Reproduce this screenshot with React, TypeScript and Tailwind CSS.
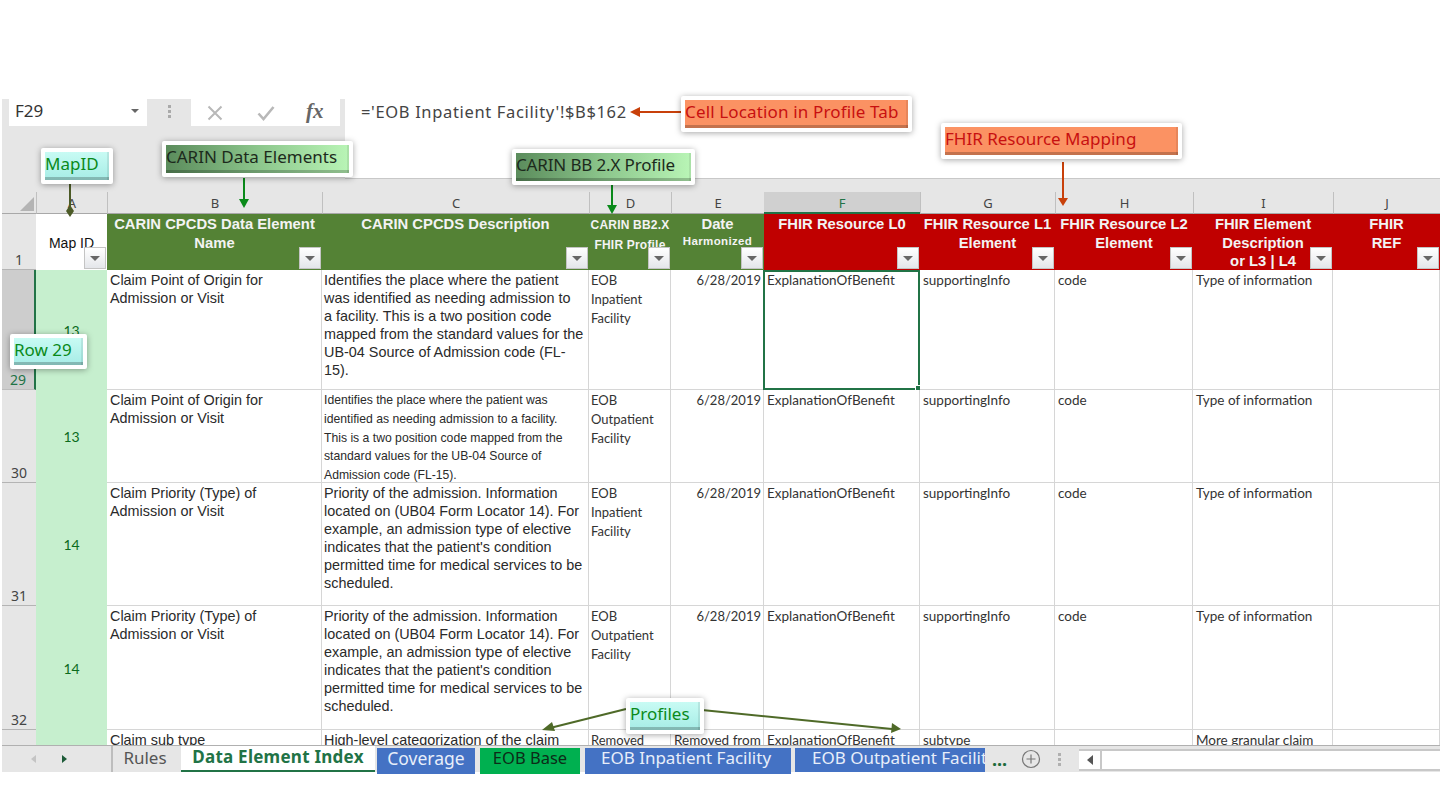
import React from "react";

const arial = "font-['Liberation_Sans',Arial,sans-serif]";
const ui = "font-['Noto_Sans',sans-serif]";
const calibri = "font-['Lato','Noto_Sans',sans-serif]";

function Filter() {
  return (
    <div className="absolute right-[1px] bottom-[1px] w-[22px] h-[22px] flex items-center justify-center bg-linear-to-b from-white to-[#e4e6ea] border border-[#c4c4c4]">
      <div className="w-0 h-0 border-l-[5px] border-r-[5px] border-t-[5px] border-l-transparent border-r-transparent border-t-[#666]" />
    </div>
  );
}

function Lines({ lines, className = "" }: { lines: string[]; className?: string }) {
  return (
    <div className={className}>
      {lines.map((l, i) => (
        <div key={i} className="whitespace-nowrap">{l}</div>
      ))}
    </div>
  );
}

type Tone = "green" | "red";
function Head({ lines, tone }: { lines: React.ReactNode[]; tone: Tone }) {
  return (
    <div
      className={`relative overflow-hidden pt-[1px] text-center font-bold text-[14.8px] leading-[18.5px] text-[#f3f3f3] ${arial} ${
        tone === "green" ? "bg-[#548235]" : "bg-[#c00000]"
      }`}
    >
      {lines.map((l, i) => (
        <div key={i} className="whitespace-nowrap">{l}</div>
      ))}
      <Filter />
    </div>
  );
}

const Col = ({ children, active }: { children: string; active?: boolean }) => (
  <div
    className={`flex items-center justify-center pt-[3px] text-[13px] ${ui} ${
      active
        ? "bg-[#d0d0d0] text-[#217346] border-b-2 border-[#217346]"
        : "bg-[#e6e6e6] text-[#444] border-l border-[#c0c0c0] border-b border-b-[#a8a8a8]"
    }`}
  >
    {children}
  </div>
);

const RowNo = ({ n, active }: { n: number; active?: boolean }) => (
  <div
    className={`flex items-end justify-center text-[14px] leading-[18px] border-b ${ui} ${
      active
        ? "bg-[#cdcdcd] text-[#217346] border-[#bdbdbd] border-r-2 border-r-[#217346]"
        : "bg-[#e6e6e6] text-[#444] border-[#b4b4b4]"
    }`}
  >
    {n}
  </div>
);

const cell = "border-r border-b border-[#d6d6d6] bg-white overflow-hidden";

const MapId = ({ n }: { n: number }) => (
  <div className={`flex items-center justify-center bg-[#c6efce] text-[#0b6b1d] text-[14px] ${calibri}`}>{n}</div>
);
const Name = ({ lines }: { lines: string[] }) => (
  <Lines lines={lines} className={`${cell} pl-[3px] pt-[1px] text-[14.4px] leading-[18px] text-[#2a2a2a] ${arial}`} />
);
const Desc = ({ lines, small }: { lines: string[]; small?: boolean }) => (
  <Lines
    lines={lines}
    className={`${cell} pl-[2px] pt-[1px] text-[#2a2a2a] ${arial} ${small ? "text-[12.2px] leading-[18.8px]" : "text-[14.4px] leading-[18px]"}`}
  />
);
const Profile = ({ lines }: { lines: string[] }) => (
  <Lines lines={lines} className={`${cell} pl-[2px] pt-[1px] text-[13px] leading-[19px] text-[#333] ${calibri}`} />
);
const DateCell = ({ v }: { v: string }) => (
  <div className={`${cell} pr-[2px] pt-[1px] text-right text-[13px] leading-[19px] text-[#333] ${calibri}`}>{v}</div>
);
const Plain = ({ v, selected }: { v?: string; selected?: boolean }) => (
  <div
    className={`relative whitespace-nowrap text-[13.5px] text-[#333] ${calibri} ${
      selected ? "bg-white border-2 border-[#217346] pl-[2px] -ml-[1px] leading-[17px]" : `${cell} pl-[3px] pt-[1px] leading-[19px]`
    }`}
  >
    {v}
    {selected && <div className="absolute -right-[3px] -bottom-[3px] w-[6px] h-[6px] bg-[#217346] border border-white" />}
  </div>
);

function Callout({ label, pos, inner, text }: { label: string; pos: string; inner: string; text: string }) {
  return (
    <div className={`absolute ${pos} bg-white p-[4px] rounded-[2px] shadow-[0_1px_6px_rgba(0,0,0,0.35)]`}>
      <div
        className={`h-full flex items-center pb-[5px] whitespace-nowrap text-[17px] leading-none shadow-[inset_0_-3px_0_rgba(0,0,0,0.22),inset_-2px_0_0_rgba(0,0,0,0.08)] ${ui} ${inner} ${text}`}
      >
        {label}
      </div>
    </div>
  );
}

const rows = [
  {
    n: 29, id: 13,
    name: ["Claim Point of Origin for", "Admission or Visit"],
    desc: ["Identifies the place where the patient", "was identified as needing admission to", "a facility. This is a two position code", "mapped from the standard values for the", "UB-04 Source of Admission code (FL-", "15)."],
    prof: ["EOB", "Inpatient", "Facility"],
  },
  {
    n: 30, id: 13, small: true,
    name: ["Claim Point of Origin for", "Admission or Visit"],
    desc: ["Identifies the place where the patient was", "identified as needing admission to a facility.", "This is a two position code mapped from the", "standard values for the UB-04 Source of", "Admission code (FL-15)."],
    prof: ["EOB", "Outpatient", "Facility"],
  },
  {
    n: 31, id: 14,
    name: ["Claim Priority (Type) of", "Admission or Visit"],
    desc: ["Priority of the admission. Information", "located on (UB04 Form Locator 14). For", "example, an admission type of elective", "indicates that the patient's condition", "permitted time for medical services to be", "scheduled."],
    prof: ["EOB", "Inpatient", "Facility"],
  },
  {
    n: 32, id: 14,
    name: ["Claim Priority (Type) of", "Admission or Visit"],
    desc: ["Priority of the admission. Information", "located on (UB04 Form Locator 14). For", "example, an admission type of elective", "indicates that the patient's condition", "permitted time for medical services to be", "scheduled."],
    prof: ["EOB", "Outpatient", "Facility"],
  },
];

function Tab({ label, w, cls }: { label: string; w: string; cls: string }) {
  return (
    <div className={`${w} h-full shrink-0 flex items-center justify-center overflow-hidden whitespace-nowrap ${ui} ${cls}`}>{label}</div>
  );
}

export default function App() {
  return (
    <div className="relative w-[1440px] h-[812px] overflow-hidden bg-white">
      <div className="pt-[99px] pl-[2px]">
        {/* formula bar */}
        <div className="flex h-[80px]">
          <div className="w-[343px] shrink-0 bg-[#e6e6e6] pl-[7px] flex items-start">
            <div className={`w-[138px] h-[27px] bg-white flex items-center justify-between pl-[6px] pr-[8px] pb-[3px] text-[17px] text-[#333] ${ui}`}>
              F29
              <div className="w-0 h-0 border-l-[4px] border-r-[4px] border-t-[4px] border-l-transparent border-r-transparent border-t-[#666]" />
            </div>
            <div className="w-[44px] h-[20px] flex flex-col items-center justify-center gap-[2px] mt-[2px]">
              <div className="w-[3px] h-[3px] bg-[#aaa]" />
              <div className="w-[3px] h-[3px] bg-[#aaa]" />
              <div className="w-[3px] h-[3px] bg-[#aaa]" />
            </div>
            <div className="w-[149px] h-[27px] bg-white flex items-center pl-[16px]">
              <svg width="16" height="16" viewBox="0 0 16 16" className="shrink-0"><path d="M1.5 1.5 14.5 14.5M14.5 1.5 1.5 14.5" stroke="#b8b8b8" strokeWidth="2" fill="none" /></svg>
              <svg width="18" height="16" viewBox="0 0 18 16" className="ml-[34px] shrink-0"><path d="M1.5 8.5 6.5 14 16.5 2" stroke="#b8b8b8" strokeWidth="2.6" fill="none" /></svg>
              <span className="ml-[31px] text-[21px] italic font-bold leading-none pb-[3px] text-[#666] font-['Liberation_Serif',serif]">fx</span>
            </div>
          </div>
          <div className={`flex-1 bg-white border-b border-[#c8c8c8] pl-[16px] pt-[1px] text-[16.5px] leading-[24px] tracking-[0.65px] text-[#444] ${ui}`}>
            ='EOB Inpatient Facility'!$B$162
          </div>
        </div>
        <div className="h-[13px] bg-[#e6e6e6]" />

        {/* sheet */}
        <div className="h-[553px] overflow-hidden">
          <div className="grid w-[1438px] grid-cols-[34px_71px_215px_267px_82px_93px_156px_135px_138px_140px_107px] grid-rows-[22px_56px_120px_93px_123px_124px_60px]">
            {/* column letters */}
            <div className="relative bg-[#e6e6e6] border-b border-[#a8a8a8]">
              <div className="absolute right-[2px] bottom-[2px] w-0 h-0 border-t-[14px] border-t-transparent border-r-[14px] border-r-[#b4b4b4]" />
            </div>
            {["A", "B", "C", "D", "E", "F", "G", "H", "I", "J"].map((c) => (
              <Col key={c} active={c === "F"}>{c}</Col>
            ))}

            {/* row 1 */}
            <RowNo n={1} />
            <div className={`relative flex items-center justify-center pt-[3px] bg-white text-[14px] text-[#111] ${arial}`}>
              Map ID
              <Filter />
            </div>
            <Head tone="green" lines={["CARIN CPCDS Data Element", "Name"]} />
            <Head tone="green" lines={["CARIN CPCDS Description"]} />
            <Head
              tone="green"
              lines={[
                <span className="text-[12px] tracking-[0.2px] leading-[19px]">CARIN BB2.X</span>,
                <span className="text-[12px] tracking-[0.2px] leading-[19px]">FHIR Profile</span>,
              ]}
            />
            <Head tone="green" lines={["Date", <span className="text-[11.5px] tracking-[0.35px] leading-[15px] block">Harmonized</span>]} />
            <Head tone="red" lines={["FHIR Resource L0"]} />
            <Head tone="red" lines={["FHIR Resource L1", "Element"]} />
            <Head tone="red" lines={["FHIR Resource L2", "Element"]} />
            <Head tone="red" lines={["FHIR Element", "Description", "or L3 | L4"]} />
            <Head tone="red" lines={["FHIR", "REF"]} />

            {/* data rows */}
            {rows.map((r) => (
              <React.Fragment key={r.n}>
                <RowNo n={r.n} active={r.n === 29} />
                <MapId n={r.id} />
                <Name lines={r.name} />
                <Desc lines={r.desc} small={r.small} />
                <Profile lines={r.prof} />
                <DateCell v="6/28/2019" />
                <Plain v="ExplanationOfBenefit" selected={r.n === 29} />
                <Plain v="supportingInfo" />
                <Plain v="code" />
                <Plain v="Type of information" />
                <Plain />
              </React.Fragment>
            ))}

            {/* row 33 */}
            <RowNo n={33} />
            <div className="bg-[#c6efce]" />
            <Name lines={["Claim sub type"]} />
            <Desc lines={["High-level categorization of the claim"]} />
            <Profile lines={["Removed"]} />
            <Plain v="Removed from" />
            <Plain v="ExplanationOfBenefit" />
            <Plain v="subtype" />
            <Plain />
            <Plain v="More granular claim" />
            <Plain />
          </div>
        </div>

        {/* tab bar */}
        <div className="flex items-stretch h-[27px] bg-[#e6e6e6] border-t border-[#b0b0b0]">
          <div className="w-[109px] shrink-0 flex items-center pl-[29px] gap-[26px]">
            <div className="w-0 h-0 border-t-[4px] border-b-[4px] border-r-[5px] border-t-transparent border-b-transparent border-r-[#c4c4c4]" />
            <div className="w-0 h-0 border-t-[4px] border-b-[4px] border-l-[5px] border-t-transparent border-b-transparent border-l-[#1d5b38]" />
          </div>
          <Tab label="Rules" w="w-[70px]" cls="border-l-2 border-[#bdbdbd] text-[#555] text-[17px] pb-[3px] pr-[4px]" />
          <Tab label="Data Element Index" w="w-[194px]" cls="bg-white font-bold text-[#217346] border-b-2 border-[#217346] text-[17px] tracking-[0.25px] pb-[2px]" />
          <div className="w-[2px] shrink-0" />
          <Tab label="Coverage" w="w-[98px]" cls="bg-[#4472c4] text-[#e8eefa] mt-[2px] text-[17.5px] pb-[6px]" />
          <div className="w-[5px] shrink-0" />
          <Tab label="EOB Base" w="w-[100px]" cls="bg-[#00b050] text-[#0c2c18] mt-[2px] text-[16.5px] pb-[6px]" />
          <div className="w-[5px] shrink-0" />
          <Tab label="EOB Inpatient Facility" w="w-[206px]" cls="bg-[#4472c4] text-[#e8eefa] mt-[2px] text-[17px] pb-[6px] pr-[4px]" />
          <div className="w-[4px] shrink-0" />
          <div className={`w-[190px] shrink-0 mt-[2px] bg-[#4472c4] text-[#e8eefa] text-[17px] whitespace-nowrap overflow-hidden pl-[17px] leading-[20px] ${ui}`}>
            EOB Outpatient Facility
          </div>
          <div className="w-[36px] shrink-0 flex items-center pl-[7px] font-bold text-[18px] leading-none text-[#1d6b3a]">...</div>
          <svg width="20" height="20" viewBox="0 0 20 20" className="self-center shrink-0">
            <circle cx="10" cy="10" r="8.5" stroke="#777" strokeWidth="1.2" fill="none" />
            <path d="M10 5.5v9M5.5 10h9" stroke="#777" strokeWidth="1.2" />
          </svg>
          <div className="w-[38px] shrink-0 flex flex-col items-center justify-center gap-[2px] pr-[2px]">
            <div className="w-[3px] h-[3px] bg-[#b0b0b0]" />
            <div className="w-[3px] h-[3px] bg-[#b0b0b0]" />
            <div className="w-[3px] h-[3px] bg-[#b0b0b0]" />
          </div>
          <div className="flex-1 flex mt-[3px] mb-[1px] bg-white border-t-2 border-b-2 border-[#c8c8c8]">
            <div className="w-[23px] shrink-0 flex items-center justify-center border-r-2 border-[#c8c8c8]">
              <div className="w-0 h-0 border-t-[5px] border-b-[5px] border-r-[6px] border-t-transparent border-b-transparent border-r-[#555]" />
            </div>
          </div>
        </div>
      </div>

      {/* annotations */}
      <svg width="1440" height="812" viewBox="0 0 1440 812" className="absolute left-0 top-0 pointer-events-none">
        <path d="M70 183V207" stroke="#4b5a26" strokeWidth="2" />
        <path d="M70 205 74 211 70 217 66 211Z" fill="#4b5a26" />
        <path d="M244 178V201" stroke="#0a8a1a" strokeWidth="2" />
        <path d="M239 199H249L244 208Z" fill="#0a8a1a" />
        <path d="M612 183V207" stroke="#0a8a1a" strokeWidth="2" />
        <path d="M607 205H617L612 214Z" fill="#0a8a1a" />
        <path d="M684 112H638" stroke="#c8400a" strokeWidth="2" />
        <path d="M640 107V117L630 112Z" fill="#c8400a" />
        <path d="M1063 162V199" stroke="#c8400a" strokeWidth="2" />
        <path d="M1058 198H1068L1063 206Z" fill="#c8400a" />
        <path d="M626 709 550 728" stroke="#4f6a28" strokeWidth="2" />
        <path d="M552 722 555 731 542 730Z" fill="#4f6a28" />
        <path d="M702 710 892 729" stroke="#4f6a28" strokeWidth="2" />
        <path d="M892 723 891 733 901 729Z" fill="#4f6a28" />
      </svg>

      <Callout label="MapID" pos="left-[41px] top-[148px] w-[72px] h-[36px]" inner="bg-linear-to-b from-[#c8fbf4] to-[#a6ece6]" text="text-[#0a8a1a]" />
      <Callout label="CARIN Data Elements" pos="left-[162px] top-[141px] w-[191px] h-[36px]" inner="bg-linear-to-r from-[#5b8c5c] via-[#8cc68c] to-[#b9f5b6]" text="text-[#1c2a1c]" />
      <Callout label="CARIN BB 2.X Profile" pos="left-[512px] top-[149px] w-[183px] h-[36px]" inner="bg-linear-to-r from-[#5b8c5c] via-[#8cc68c] to-[#b9f5b6]" text="text-[#1c2a1c] tracking-[-0.15px]" />
      <Callout label="Cell Location in Profile Tab" pos="left-[681px] top-[96px] w-[231px] h-[36px]" inner="bg-[#fb9263]" text="text-[#c81010] tracking-[0.15px]" />
      <Callout label="FHIR Resource Mapping" pos="left-[941px] top-[123px] w-[241px] h-[36px]" inner="bg-[#fb9263]" text="text-[#c81010]" />
      <Callout label="Row 29" pos="left-[10px] top-[334px] w-[77px] h-[35px]" inner="bg-linear-to-b from-[#c8fbf4] to-[#a6ece6]" text="text-[#0a8a1a]" />
      <Callout label="Profiles" pos="left-[626px] top-[698px] w-[78px] h-[36px]" inner="bg-linear-to-b from-[#c8fbf4] to-[#a6ece6]" text="text-[#0a8a1a]" />
    </div>
  );
}
